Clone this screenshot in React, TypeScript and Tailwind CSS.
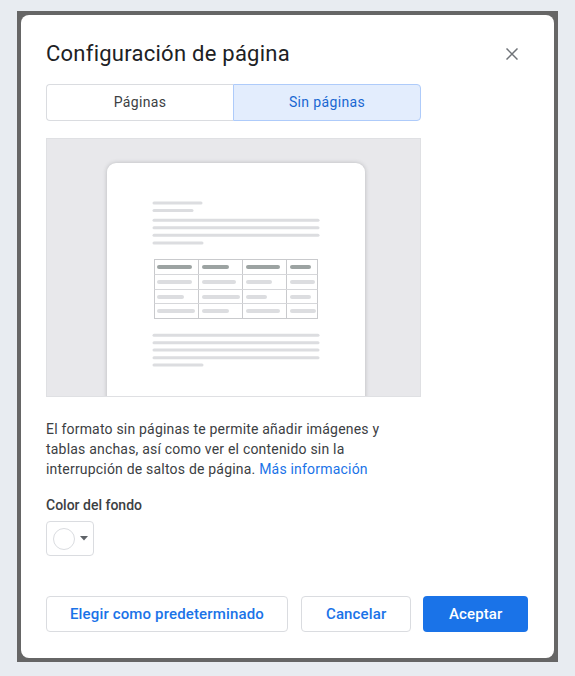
import React from 'react';

const PageSketch: React.FC = () => {
  const light = '#dcdde0';
  const dark = '#9ca3a2';
  const textLines = (ys: number[], shortEnd: number) =>
    ys.map((y, i) => (
      <line key={y} x1={47} x2={i === ys.length - 1 ? shortEnd : 211} y1={y} y2={y} stroke={light} strokeWidth={3} strokeLinecap="round" />
    ));
  const cols = [
    [52, 83],
    [97, 120],
    [141, 171],
    [185, 202],
  ];
  const rows: { y: number; ends: number[]; color: string }[] = [
    { y: 104, ends: [83, 120, 171, 202], color: dark },
    { y: 119, ends: [83, 127, 163, 206], color: light },
    { y: 134, ends: [75, 131, 158, 202], color: light },
    { y: 148, ends: [86, 120, 171, 207], color: light },
  ];
  return (
    <svg width="258" height="240" viewBox="0 0 258 240" className="block">
      <line x1={47} x2={94} y1={40} y2={40} stroke={light} strokeWidth={3} strokeLinecap="round" />
      <line x1={47} x2={85} y1={47.5} y2={47.5} stroke={light} strokeWidth={3} strokeLinecap="round" />
      {textLines([57.3, 64.7, 72.3, 80], 95)}
      <rect x={47.5} y={96.5} width={163} height={59} fill="none" stroke="#c9cacd" strokeWidth={1} />
      {[91.5, 135.5, 179.5].map((x) => (
        <line key={x} x1={x} x2={x} y1={96.5} y2={155.5} stroke="#c9cacd" strokeWidth={1} />
      ))}
      {[111.5, 126.5, 140.5].map((y) => (
        <line key={y} x1={47.5} x2={210.5} y1={y} y2={y} stroke="#d6d7da" strokeWidth={1} />
      ))}
      {rows.map((r) =>
        cols.map((c, i) => (
          <line key={`${r.y}-${i}`} x1={c[0]} x2={r.ends[i]} y1={r.y} y2={r.y} stroke={r.color} strokeWidth={4} strokeLinecap="round" />
        ))
      )}
      {textLines([172.3, 179.7, 187, 194.7, 202], 95)}
    </svg>
  );
};

const App: React.FC = () => {
  return (
    <div className="w-[575px] h-[676px] bg-[#e8ecf1] pl-[17px] pt-[11px]" style={{ fontFamily: 'Roboto, "Liberation Sans", sans-serif' }}>
      <div className="w-[541px] h-[651px] bg-[#666666] p-[4px]">
        {/* Dialog */}
        <div className="h-full bg-white rounded-[8px] flex flex-col pl-[25px] pr-[26px] pt-[25px] pb-[26px]">
          {/* Header */}
          <div className="flex items-center justify-between h-[28px]">
            <h1 className="text-[22px] leading-[28px] tracking-[0.25px] text-[#202124]">Configuración de página</h1>
            <button className="w-[24px] h-[24px] flex items-center justify-center mr-[4px] text-[#6f7378]">
              <svg width="12" height="12" viewBox="0 0 12 12">
                <path d="M0.5 0.5L11.5 11.5M11.5 0.5L0.5 11.5" stroke="currentColor" strokeWidth="1.5" />
              </svg>
            </button>
          </div>

          {/* Tabs */}
          <div className="mt-[16px] w-[375px] h-[37px] flex text-[14px] tracking-[0.35px]">
            <button className="flex-1 border border-[#dadce0] border-r-0 rounded-l-[4px] text-[#3c4043]">Páginas</button>
            <button className="flex-1 border border-[#aecbfa] bg-[#e3edfd] rounded-r-[4px] text-[#1967d2]">Sin páginas</button>
          </div>

          {/* Preview */}
          <div className="mt-[17px] w-[375px] h-[259px] bg-[#e8e8eb] border border-[#dfe0e3] overflow-hidden flex pl-[60px] pt-[24px]">
            <div className="w-[258px] h-[260px] bg-white rounded-t-[9px] shadow-[0_0_4px_rgba(60,64,67,0.28)] shrink-0">
              <PageSketch />
            </div>
          </div>

          {/* Description */}
          <p className="mt-[22px] w-[350px] text-[14px] leading-[20px] tracking-[0.2px] text-[#3c4043]">
            El formato sin páginas te permite añadir imágenes y tablas anchas, así como ver el contenido sin la interrupción de saltos de página.{' '}
            <a className="text-[#1a73e8]">Más información</a>
          </p>

          <div className="mt-[16px] text-[14px] leading-[20px] font-medium text-[#3c4043]">Color del fondo</div>

          <button className="mt-[6px] w-[48px] h-[35px] border border-[#dadce0] rounded-[4px] flex items-center pl-[6px] gap-[5px]">
            <span className="w-[22px] h-[22px] rounded-full border border-[#dadce0] bg-white" />
            <svg width="8" height="5" viewBox="0 0 8 5">
              <path d="M0 0H8L4 4.5Z" fill="#5f6368" />
            </svg>
          </button>

          {/* Footer */}
          <div className="mt-auto flex items-center gap-[12px] text-[15px] tracking-[0.15px] font-medium">
            <button className="w-[243px] h-[36px] border border-[#dadce0] rounded-[4px] text-[#1a73e8]">Elegir como predeterminado</button>
            <button className="ml-[1px] w-[111px] h-[36px] border border-[#dadce0] rounded-[4px] text-[#1a73e8]">Cancelar</button>
            <button className="w-[105px] h-[36px] bg-[#1a73e8] rounded-[4px] text-white">Aceptar</button>
          </div>
        </div>
      </div>
    </div>
  );
};

export default App;
